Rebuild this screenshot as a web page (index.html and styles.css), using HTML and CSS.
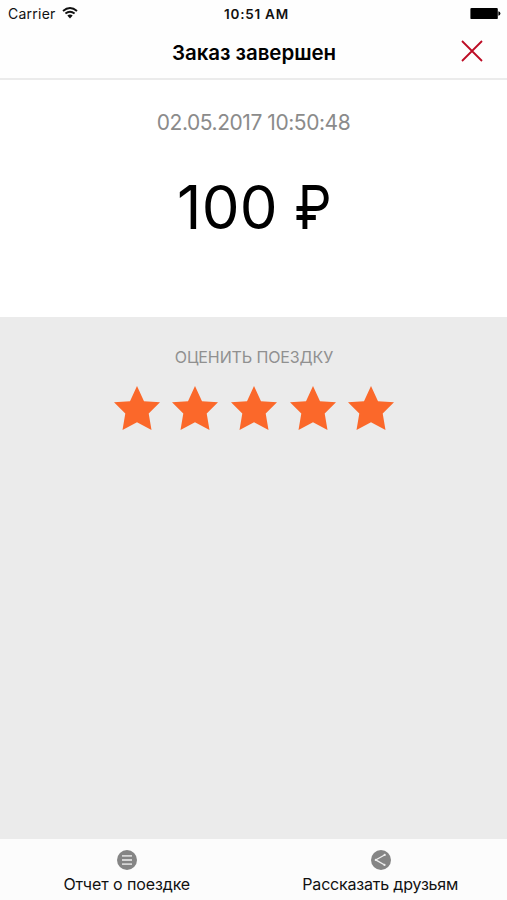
FILE: index.html
```html
<!DOCTYPE html>
<html lang="ru">
<head>
<meta charset="utf-8">
<title>Заказ завершен</title>
<link rel="stylesheet" href="styles.css">
</head>
<body>
<div class="screen">
  <header class="header">
    <div class="status">
      <div class="carrier"><span class="carrier-name">Carrier</span>
        <svg class="wifi" viewBox="0 0 16 12"><path d="M1 4Q8-1.8 15 4M3.4 6.6Q8 3 12.6 6.6" fill="none" stroke="#111" stroke-width="1.9"/><path d="M5.3 8.6Q8 6.6 10.7 8.6L8 11.6z" fill="#111"/></svg>
      </div>
      <span class="time">10:51 AM</span>
      <svg class="battery" viewBox="0 0 31 13"><rect x=".4" y=".9" width="27.4" height="11.2" rx="1.2"/><path d="M28.4 4.3q2 .5 2 2.2t-2 2.2z"/></svg>
    </div>
    <div class="navbar">
      <h1 class="title">Заказ завершен</h1>
      <svg class="close" viewBox="0 0 22 22"><path d="M1 1l20 20M21 1L1 21" fill="none" stroke="#bd0b24" stroke-width="1.8"/></svg>
    </div>
  </header>
  <section class="summary">
    <time class="date">02.05.2017 10:50:48</time>
    <div class="price"><span class="amount">100</span><span class="currency">₽</span></div>
  </section>
  <section class="rating">
    <h2 class="label">ОЦЕНИТЬ ПОЕЗДКУ</h2>
    <div class="stars">
      <svg class="star" viewBox="0 0 46 44"><path d="M23 0l7 15.2 16 1.1-11.3 11.3L37.5 44 23 36.2 8.5 44l2.8-16.4L0 16.3l16-1.1z"/></svg>
      <svg class="star" viewBox="0 0 46 44"><path d="M23 0l7 15.2 16 1.1-11.3 11.3L37.5 44 23 36.2 8.5 44l2.8-16.4L0 16.3l16-1.1z"/></svg>
      <svg class="star" viewBox="0 0 46 44"><path d="M23 0l7 15.2 16 1.1-11.3 11.3L37.5 44 23 36.2 8.5 44l2.8-16.4L0 16.3l16-1.1z"/></svg>
      <svg class="star" viewBox="0 0 46 44"><path d="M23 0l7 15.2 16 1.1-11.3 11.3L37.5 44 23 36.2 8.5 44l2.8-16.4L0 16.3l16-1.1z"/></svg>
      <svg class="star" viewBox="0 0 46 44"><path d="M23 0l7 15.2 16 1.1-11.3 11.3L37.5 44 23 36.2 8.5 44l2.8-16.4L0 16.3l16-1.1z"/></svg>
    </div>
  </section>
  <nav class="tabs">
    <div class="tab">
      <svg class="tab-icon" viewBox="0 0 20 20"><circle cx="10" cy="10" r="10" fill="#858585"/><path d="M5 5.8h10M5 10h10M5 14.2h10" stroke="#d6d6d6" stroke-width="1.8"/></svg>
      <span class="tab-label">Отчет о поездке</span>
    </div>
    <div class="tab">
      <svg class="tab-icon" viewBox="0 0 20 20"><circle cx="10" cy="10" r="10" fill="#858585"/><path d="M14 4.8L4.7 9.9l9 5.1" fill="none" stroke="#eee" stroke-width="1.3"/><g fill="#eee"><circle cx="13.7" cy="4.9" r="1.1"/><circle cx="4.9" cy="9.9" r="1.1"/><circle cx="13.5" cy="14.9" r="1.1"/></g></svg>
      <span class="tab-label share">Рассказать друзьям</span>
    </div>
  </nav>
</div>
</body>
</html>
```

FILE: styles.css
```css
* { box-sizing: border-box; }
body { margin: 0; font-family: Inter, "Liberation Sans", sans-serif; color: #000; }
h1, h2 { margin: 0; }
svg { display: block; flex: none; }
.screen { height: 900px; display: flex; flex-direction: column; background: #fff; }
.header { height: 80px; border-bottom: 2px solid #ebebeb; background: #fefefe; }
.status { height: 27px; padding: 0 6px 0 8px; display: grid; grid-template-columns: 1fr auto 1fr; align-items: center; font-size: 14px; line-height: 18px; color: #111; }
.carrier { display: flex; align-items: center; gap: 6px; }
.carrier-name { letter-spacing: .25px; }
.wifi { width: 16px; height: 12px; margin-bottom: 2px; }
.time { font-size: 13.5px; font-weight: 600; letter-spacing: .75px; padding-left: 4px; }
.battery { width: 31px; height: 13px; justify-self: end; }
.navbar { height: 51px; display: grid; grid-template-columns: 1fr auto 1fr; align-items: center; padding: 0 24px; }
.title { grid-column: 2; font-size: 20.5px; line-height: 26px; font-weight: 600; letter-spacing: -.05px; padding-left: 1px; }
.close { width: 22px; height: 22px; justify-self: end; margin-bottom: 3px; }
.summary { height: 237px; padding-top: 30px; display: flex; flex-direction: column; align-items: center; }
.date { font-size: 21px; line-height: 26px; letter-spacing: -.44px; color: #8b8b8b; }
.price { display: flex; margin-top: 35px; font-size: 60px; line-height: 73px; }
.amount { letter-spacing: .3px; margin-left: 4px; }
.currency { margin-left: 14px; transform: scaleX(.88); }
.rating { flex: 1; padding-top: 30px; display: flex; flex-direction: column; align-items: center; background: #ebebeb; }
.label { font-size: 16px; line-height: 20px; font-weight: 400; letter-spacing: -.12px; padding-left: 1px; color: #909090; }
.stars { display: flex; gap: 12.7px; margin-top: 19px; padding-left: 1px; }
.star { width: 46px; height: 44px; fill: #fb682a; }
.tabs { height: 61px; display: flex; background: #fcfcfc; }
.tab { flex: 1; padding-top: 11px; display: flex; flex-direction: column; align-items: center; }
.tab-icon { width: 20px; height: 20px; margin-left: 1px; }
.tab-label { margin-top: 4px; font-size: 16px; line-height: 20px; letter-spacing: -.1px; color: #111; }
.share { letter-spacing: -.2px; }
```
